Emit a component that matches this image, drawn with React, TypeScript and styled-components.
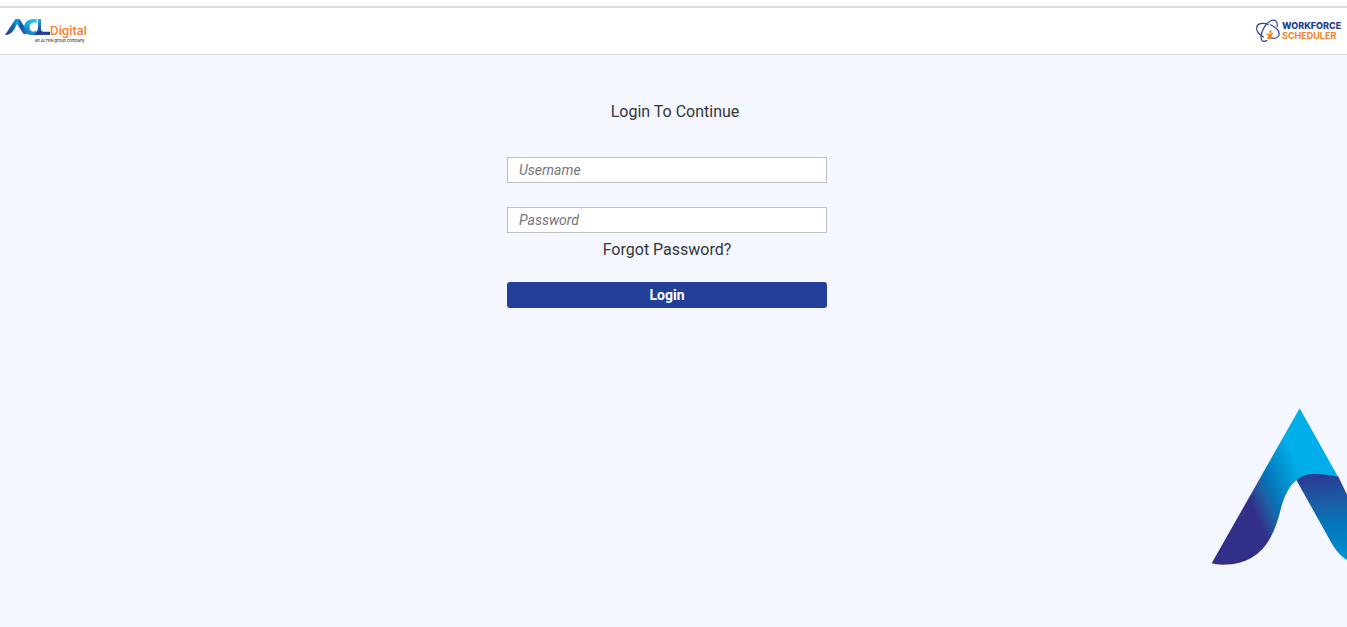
import React from "react";
import styled, { createGlobalStyle } from "styled-components";

const GlobalStyle = createGlobalStyle`
  *, *::before, *::after { box-sizing: border-box; }
  body {
    margin: 0;
    background: #f4f7ff;
    color: #32363a;
    font-family: Roboto, "Liberation Sans", sans-serif;
    font-size: 16px;
  }
`;

const Page = styled.div`
  display: flex;
  flex-direction: column;
  min-height: 100vh;
  padding-top: 6px;
  background: linear-gradient(#fff 6px, #f4f7ff 6px);
`;

const Header = styled.header`
  display: flex;
  align-items: flex-start;
  justify-content: space-between;
  height: 49px;
  padding: 10px 2px 0 4px;
  background: #fff;
  border-top: 2px solid #dedfe0;
  border-bottom: 1px solid #d9dce1;
`;

const Logo = styled.svg`
  display: block;
  font-family: Inter, "Liberation Sans", sans-serif;
`;

const Main = styled.main`
  display: flex;
  flex: 1;
  flex-direction: column;
  align-items: center;
`;

const LoginForm = styled.form`
  display: flex;
  flex-direction: column;
  width: 320px;
  margin: 46px 13px 0 0;
`;

const Title = styled.h1`
  margin: 0 0 34px;
  padding-left: 16px;
  font-size: 16px;
  font-weight: 400;
  line-height: 22px;
  text-align: center;
`;

const Field = styled.input`
  height: 26px;
  padding: 0 11px;
  border: 1px solid #bfbfbf;
  border-radius: 0;
  background: #fff;
  color: #32363a;
  font: 14px Roboto, "Liberation Sans", sans-serif;

  & + & { margin-top: 24px; }

  &::placeholder {
    color: #74777a;
    font-style: italic;
    opacity: 1;
  }
`;

const ForgotLink = styled.a`
  align-self: center;
  margin: 6px 0 21px;
  color: #32363a;
  line-height: 22px;
  text-decoration: none;
`;

const LoginButton = styled.button`
  height: 26px;
  padding: 0;
  border: 0;
  border-radius: 3px;
  background: #223f99;
  color: #fff;
  font: 700 14px Roboto, "Liberation Sans", sans-serif;
  cursor: pointer;
`;

const Artwork = styled.svg`
  display: block;
  align-self: flex-end;
  margin: auto 0 62px;
`;

const AclLogo = () => (
  <Logo width="86" height="28" viewBox="4 18 86 28" role="img" aria-label="ACL Digital">
    <defs>
      <linearGradient id="aclA" x1="5" y1="0" x2="28" y2="0" gradientUnits="userSpaceOnUse">
        <stop offset="0" stopColor="#2a2f8c" />
        <stop offset="0.35" stopColor="#1267b4" />
        <stop offset="0.52" stopColor="#10a4e4" />
        <stop offset="0.7" stopColor="#1d4fa0" />
        <stop offset="1" stopColor="#1585c8" />
      </linearGradient>
      <linearGradient id="aclC" x1="25" y1="34" x2="38" y2="20" gradientUnits="userSpaceOnUse">
        <stop offset="0" stopColor="#1a63b0" />
        <stop offset="0.45" stopColor="#17a9e6" />
        <stop offset="1" stopColor="#35c3f3" />
      </linearGradient>
      <linearGradient id="aclL" x1="0" y1="19" x2="0" y2="35" gradientUnits="userSpaceOnUse">
        <stop offset="0" stopColor="#22b4ec" />
        <stop offset="0.5" stopColor="#1b6fba" />
        <stop offset="0.85" stopColor="#25378f" />
        <stop offset="1" stopColor="#1f55a6" />
      </linearGradient>
    </defs>
    <path d="M5 35 L15.5 19 H19.5 L28 32 Q26.5 35 23.5 34 L17 24 C14.5 30 11 35.5 5 35Z" fill="url(#aclA)" />
    <path d="M36.8 19 V22.4 H34 C29.5 22.4 28.5 28.5 31 30.8 C33 32.2 34.8 31.6 36 30.6 L37 34 Q34 35 31 35 C23.5 35 21.8 25 27 21 Q29.5 19 33 19Z" fill="url(#aclC)" />
    <path d="M38 19 H41 V29 Q41 31.8 43.5 31.8 H50 V35 H32 Q38 33 38 27Z" fill="url(#aclL)" />
    <text x="50" y="35" fontSize="12" fontWeight="600" fill="#f58634">Digital</text>
    <text x="35" y="42" fontSize="4" fontWeight="500" fill="#414042">an ALTEN group company</text>
  </Logo>
);

const SchedulerLogo = () => (
  <Logo width="90" height="26" viewBox="1255 18 90 26" role="img" aria-label="Workforce Scheduler">
    <g fill="none" stroke="#2d4596" strokeWidth="1.2" strokeLinecap="round">
      <path d="M1277 27 C1278 22 1275.5 19 1271.5 20.5 C1265 23 1259.5 34 1261.5 39.5 C1262.2 41.5 1264.5 42 1267 40.5" />
      <path d="M1268 24.5 C1262.5 22.5 1257.5 23.5 1256.7 27 C1256 31 1260 35 1263.5 37" />
      <path d="M1270.5 24.8 C1276 27.5 1280 31.5 1279 35 C1278.2 38 1274.5 38.7 1271 37.8" />
    </g>
    <circle cx="1270.5" cy="31.8" r="1.2" fill="#f58220" />
    <path d="M1265.5 33.5 L1269 34.2 L1273.5 32.5 L1271.8 36 L1270 39.5 L1267 38.5 L1268.3 36Z" fill="#f58220" />
    <text x="1282" y="29" fontSize="9" fontWeight="800" fill="#25408f">WORKFORCE</text>
    <text x="1282" y="39" fontSize="9" fontWeight="700" fill="#f58220">SCHEDULER</text>
  </Logo>
);

const BrandArtwork = () => (
  <Artwork width="136" height="157" viewBox="33 24 408 471" aria-hidden="true">
    <defs>
      <linearGradient id="leftLeg" x1="167" y1="345" x2="327" y2="277" gradientUnits="userSpaceOnUse">
        <stop offset="0" stopColor="#322f88" />
        <stop offset="0.28" stopColor="#1d62a6" />
        <stop offset="0.4" stopColor="#0672b6" />
        <stop offset="1" stopColor="#00aee9" />
      </linearGradient>
      <linearGradient id="rightLeg" x1="345" y1="210" x2="375" y2="490" gradientUnits="userSpaceOnUse">
        <stop offset="0" stopColor="#2c3590" />
        <stop offset="0.42" stopColor="#1764aa" />
        <stop offset="0.55" stopColor="#0471b8" />
        <stop offset="1" stopColor="#0095d4" />
      </linearGradient>
    </defs>
    <path d="M289 240 C312 212 350 216 414 228 L441 284 V480 C420 468 405 448 395 430Z" fill="url(#rightLeg)" />
    <path d="M299 25 L414 230 C372 221 336 219 314 226 C279 239 256 275 243 325 C223 405 190 494 66 494 Q48 494 35 490Z" fill="url(#leftLeg)" />
  </Artwork>
);

export default function App() {
  return (
    <>
      <GlobalStyle />
      <Page>
        <Header>
          <AclLogo />
          <SchedulerLogo />
        </Header>
        <Main>
          <LoginForm onSubmit={(event: React.FormEvent) => event.preventDefault()}>
            <Title>Login To Continue</Title>
            <Field type="text" aria-label="Username" placeholder="Username" autoComplete="username" />
            <Field type="password" aria-label="Password" placeholder="Password" autoComplete="current-password" />
            <ForgotLink href="#forgot">Forgot Password?</ForgotLink>
            <LoginButton type="submit">Login</LoginButton>
          </LoginForm>
          <BrandArtwork />
        </Main>
      </Page>
    </>
  );
}
